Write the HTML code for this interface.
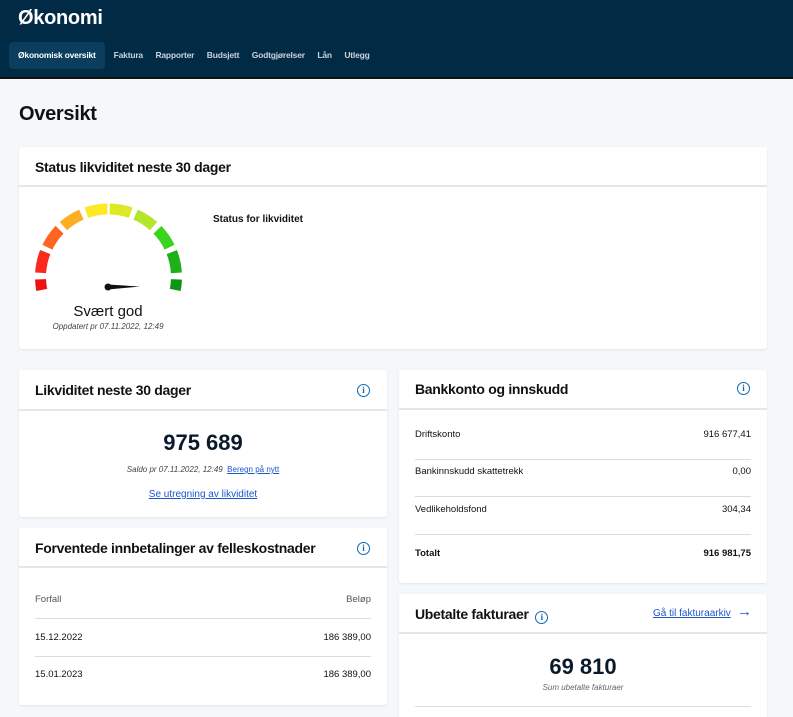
<!DOCTYPE html>
<html><head><meta charset="utf-8">
<style>
*{margin:0;padding:0;box-sizing:border-box}
html,body{width:793px;height:717px;overflow:hidden}
body{background:#f4f8fb;font-family:"Liberation Sans",sans-serif;color:#111;position:relative}
.hdr{position:absolute;left:0;top:0;width:793px;height:79px;background:#012a44;border-bottom:2px solid #111}
.hdr h1{position:absolute;left:18px;top:7px;color:#fff;font-size:20px;font-weight:bold;letter-spacing:-0.3px}
.nav{position:absolute;top:42px;left:9px;height:27px;display:flex}
.nav span{color:#c9d3da;font-size:8.5px;font-weight:bold;padding:0 6px;line-height:27px;letter-spacing:-0.2px;margin-right:0.5px}
.nav span.a{background:#0a3d5e;color:#fff;border-radius:4px;padding:0 9px;margin-right:3px}
h2{position:absolute;left:19px;top:103px;font-size:20px;font-weight:bold;letter-spacing:-0.3px}
.card{position:absolute;background:#fff;border-radius:3px;box-shadow:0 1px 2px rgba(0,0,0,.08)}
.ch{position:absolute;left:0;right:0;top:0;border-bottom:2px solid #e4e7ea}
.ch b{position:absolute;left:16px;font-size:14px;letter-spacing:-0.3px}
.info{position:absolute;width:13px;height:13px;border:1.5px solid #0a6ab8;border-radius:50%;color:#0a6ab8;font-size:9px;font-weight:bold;text-align:center;line-height:10px;font-family:"Liberation Serif",serif}
.row{position:absolute;left:16px;right:16px;font-size:9.5px;display:flex;justify-content:space-between}
.ln{position:absolute;left:16px;right:16px;height:1px;background:#d6dde6}
a{color:#1a56c9;text-decoration:underline}
.c{position:absolute;left:0;right:0;text-align:center}
</style></head><body>
<div class="hdr"><h1>Økonomi</h1>
<div class="nav"><span class="a">Økonomisk oversikt</span><span>Faktura</span><span>Rapporter</span><span>Budsjett</span><span>Godtgjørelser</span><span>Lån</span><span>Utlegg</span></div></div>
<h2>Oversikt</h2>

<div class="card" style="left:19px;top:147px;width:748px;height:202px">
<div class="ch" style="height:40px"><b style="top:12px">Status likviditet neste 30 dager</b></div>
<svg style="position:absolute;left:0;top:0" width="200" height="202" viewBox="19 147 200 202">
<g fill="none" stroke-width="11">
<circle cx="108.5" cy="277" r="68" stroke="#ee1111" stroke-dasharray="10.7 500" transform="rotate(169 108.5 277)"/>
<circle cx="108.5" cy="277" r="68" stroke="#fa2a1c" stroke-dasharray="21.4 500" transform="rotate(183.5 108.5 277)"/>
<circle cx="108.5" cy="277" r="68" stroke="#fd6520" stroke-dasharray="21.4 500" transform="rotate(206 108.5 277)"/>
<circle cx="108.5" cy="277" r="68" stroke="#fdae22" stroke-dasharray="21.4 500" transform="rotate(228.5 108.5 277)"/>
<circle cx="108.5" cy="277" r="68" stroke="#fde826" stroke-dasharray="21.4 500" transform="rotate(251 108.5 277)"/>
<circle cx="108.5" cy="277" r="68" stroke="#dde925" stroke-dasharray="21.4 500" transform="rotate(271 108.5 277)"/>
<circle cx="108.5" cy="277" r="68" stroke="#b3e62c" stroke-dasharray="21.4 500" transform="rotate(293.5 108.5 277)"/>
<circle cx="108.5" cy="277" r="68" stroke="#3ad41c" stroke-dasharray="21.4 500" transform="rotate(316 108.5 277)"/>
<circle cx="108.5" cy="277" r="68" stroke="#1eaf1a" stroke-dasharray="21.4 500" transform="rotate(338.5 108.5 277)"/>
<circle cx="108.5" cy="277" r="68" stroke="#0b9612" stroke-dasharray="10.7 500" transform="rotate(362 108.5 277)"/>
</g>
<circle cx="108" cy="287" r="3.5" fill="#111"/>
<polygon points="108,284.5 140,286.5 108,289.5" fill="#111"/>
</svg>
<div style="position:absolute;left:0;width:178px;text-align:center;top:156px;font-size:15px">Svært god</div>
<div style="position:absolute;left:0;width:178px;text-align:center;top:175px;font-size:8px;font-style:italic;color:#444">Oppdatert pr 07.11.2022, 12:49</div>
<div style="position:absolute;left:194px;top:67px;font-size:10px;font-weight:bold">Status for likviditet</div>
</div>

<div class="card" style="left:19px;top:370px;width:368px;height:147px">
<div class="ch" style="height:41px"><b style="top:12px">Likviditet neste 30 dager</b><div class="info" style="left:338px;top:14px">i</div></div>
<div class="c" style="top:60px;font-size:22px;font-weight:bold;color:#0b1a2b">975 689</div>
<div class="c" style="top:95px;font-size:8px;color:#444"><i>Saldo pr 07.11.2022, 12:49</i>&nbsp; <a>Beregn på nytt</a></div>
<div class="c" style="top:119px;font-size:10px"><a>Se utregning av likviditet</a></div>
</div>

<div class="card" style="left:399px;top:370px;width:368px;height:213px">
<div class="ch" style="height:40px"><b style="top:11px">Bankkonto og innskudd</b><div class="info" style="left:338px;top:12px">i</div></div>
<div class="row" style="top:59px"><span>Driftskonto</span><span>916 677,41</span></div>
<div class="ln" style="top:89px"></div>
<div class="row" style="top:96px"><span>Bankinnskudd skattetrekk</span><span>0,00</span></div>
<div class="ln" style="top:126px"></div>
<div class="row" style="top:134px"><span>Vedlikeholdsfond</span><span>304,34</span></div>
<div class="ln" style="top:164px"></div>
<div class="row" style="top:178px;font-weight:bold"><span>Totalt</span><span>916 981,75</span></div>
</div>

<div class="card" style="left:19px;top:528px;width:368px;height:177px">
<div class="ch" style="height:40px"><b style="top:12px">Forventede innbetalinger av felleskostnader</b><div class="info" style="left:338px;top:14px">i</div></div>
<div class="row" style="top:66px;color:#555"><span>Forfall</span><span>Beløp</span></div>
<div class="ln" style="top:90px"></div>
<div class="row" style="top:104px"><span>15.12.2022</span><span>186 389,00</span></div>
<div class="ln" style="top:128px"></div>
<div class="row" style="top:141px"><span>15.01.2023</span><span>186 389,00</span></div>
</div>

<div class="card" style="left:399px;top:594px;width:368px;height:140px">
<div class="ch" style="height:40px"><b style="top:12px">Ubetalte fakturaer <span class="info" style="position:relative;display:inline-block;top:1px;margin-left:3px">i</span></b>
<a style="position:absolute;left:254px;top:14px;font-size:10px">Gå til fakturaarkiv</a><span style="position:absolute;left:338px;top:9px;color:#1a56c9;font-size:15px">→</span></div>
<div class="c" style="top:60px;font-size:22px;font-weight:bold;color:#0b1a2b">69 810</div>
<div class="c" style="top:89px;font-size:8px;font-style:italic;color:#666">Sum ubetalte fakturaer</div>
<div class="ln" style="top:112px"></div>
</div>
</body></html>
